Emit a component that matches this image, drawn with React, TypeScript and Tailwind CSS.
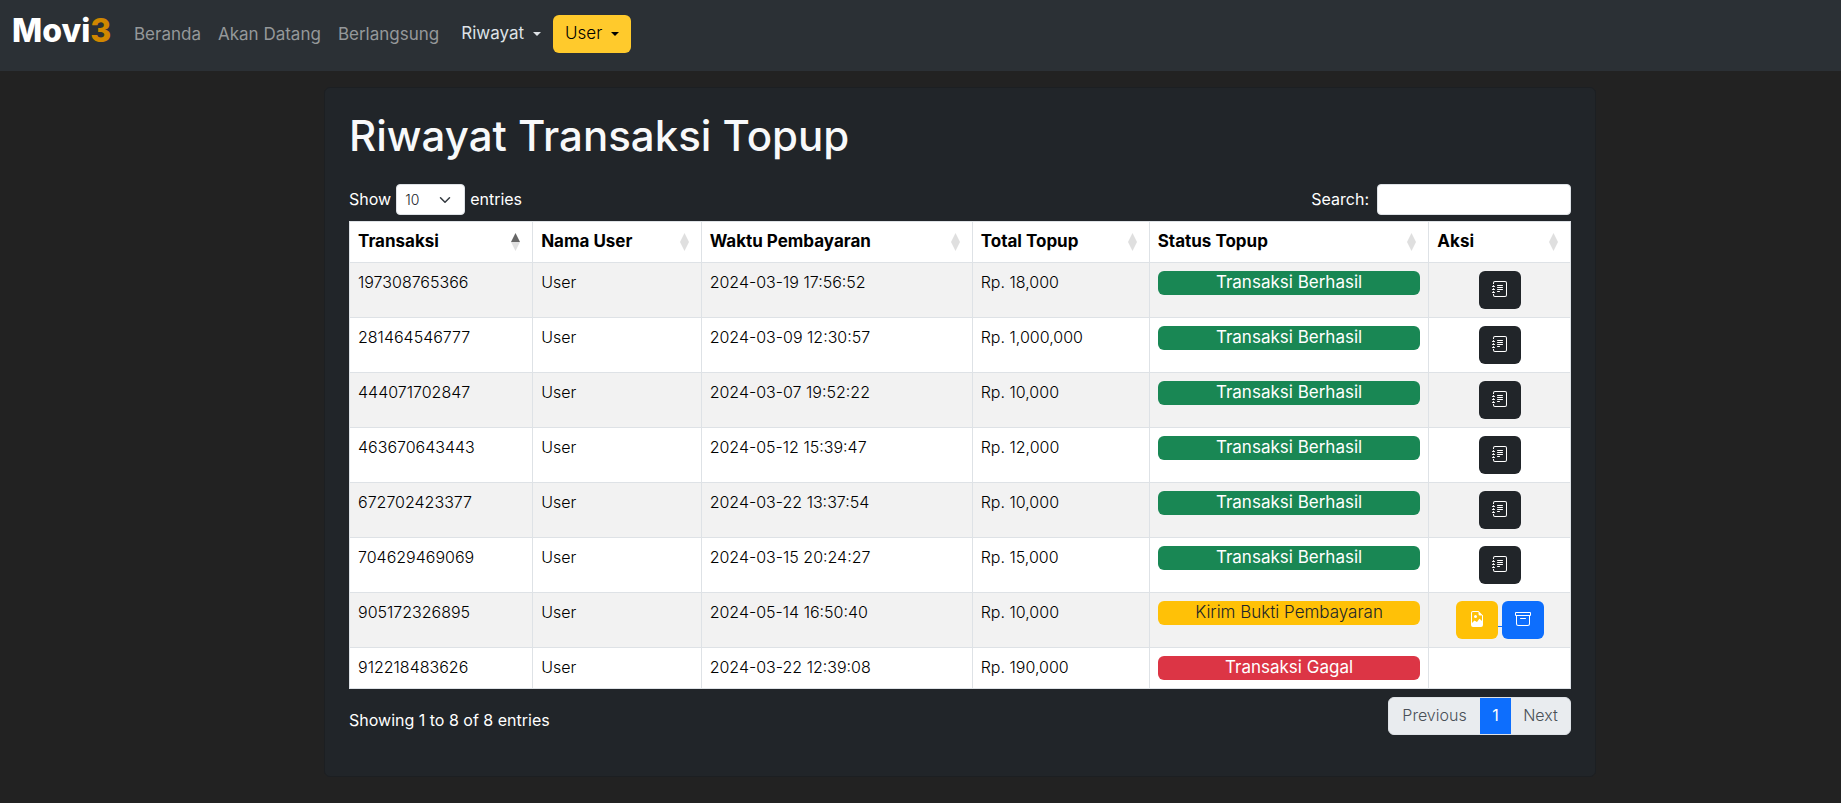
import { BsArchive, BsFileEarmarkImage, BsJournalText } from "react-icons/bs";

type Status = "success" | "pending" | "failed";

interface Transaction {
  id: string;
  time: string;
  total: string;
  status: Status;
}

const transactions: Transaction[] = [
  { id: "197308765366", time: "2024-03-19 17:56:52", total: "Rp. 18,000", status: "success" },
  { id: "281464546777", time: "2024-03-09 12:30:57", total: "Rp. 1,000,000", status: "success" },
  { id: "444071702847", time: "2024-03-07 19:52:22", total: "Rp. 10,000", status: "success" },
  { id: "463670643443", time: "2024-05-12 15:39:47", total: "Rp. 12,000", status: "success" },
  { id: "672702423377", time: "2024-03-22 13:37:54", total: "Rp. 10,000", status: "success" },
  { id: "704629469069", time: "2024-03-15 20:24:27", total: "Rp. 15,000", status: "success" },
  { id: "905172326895", time: "2024-05-14 16:50:40", total: "Rp. 10,000", status: "pending" },
  { id: "912218483626", time: "2024-03-22 12:39:08", total: "Rp. 190,000", status: "failed" },
];

const statuses: Record<Status, { label: string; className: string }> = {
  success: { label: "Transaksi Berhasil", className: "bg-[#198754] text-white" },
  pending: { label: "Kirim Bukti Pembayaran", className: "bg-[#ffc107] font-light text-[#212529]" },
  failed: { label: "Transaksi Gagal", className: "bg-[#dc3545] text-white" },
};

const columns = [
  { label: "Transaksi", width: "w-[15%]" },
  { label: "Nama User", width: "w-[13.8%]" },
  { label: "Waktu Pembayaran", width: "w-[22.2%]" },
  { label: "Total Topup", width: "w-[14.5%]" },
  { label: "Status Topup", width: "w-[22.9%]" },
  { label: "Aksi", width: "w-[11.6%]" },
];

function Caret() {
  return (
    <svg className="h-[4px] w-[8px]" viewBox="0 0 8 4" fill="currentColor" aria-hidden="true">
      <path d="M0 0h8L4 4z" />
    </svg>
  );
}

function SortIcon({ ascending }: { ascending: boolean }) {
  return (
    <svg className="h-[18px] w-[9px] shrink-0" viewBox="0 0 9 18" aria-hidden="true">
      <path d="M4.500 0 9 9H0z" fill={ascending ? "#666" : "#dfdfdf"} />
      <path d="M4.500 18 9 9H0z" fill="#dfdfdf" />
    </svg>
  );
}

const iconButton = "flex h-[38px] w-[42px] items-center justify-center rounded-md pb-0.5 text-white";
const textCell = "border border-[#dee2e6] px-2 pt-[7px] pb-[9px] font-light";

function Actions({ status }: { status: Status }) {
  if (status === "failed") return null;
  if (status === "success") {
    return (
      <button type="button" aria-label="Detail" className={`${iconButton} bg-[#212529]`}>
        <BsJournalText size={16} />
      </button>
    );
  }
  return (
    <>
      <a href="#bukti" aria-label="Kirim bukti" className="flex items-center text-[#0d6efd]">
        <span className={`${iconButton} bg-[#ffc107]`}>
          <BsFileEarmarkImage size={16} />
        </span>
        <span className="mt-3 h-px w-1 bg-[#0d6efd]" />
      </a>
      <button type="button" aria-label="Arsip" className={`${iconButton} bg-[#0d6efd]`}>
        <BsArchive size={16} />
      </button>
    </>
  );
}

export default function App() {
  return (
    <div className="min-h-screen bg-[#222222] font-['Inter',sans-serif] text-base text-white">
      <nav className="flex h-[71px] items-start bg-[#2b3035] px-3 pt-[15px] text-[17px]">
        <a href="#home" className="-mt-2 w-[122px] text-[32px] leading-[48px] font-extrabold">
          Movi<span className="text-[#d08700]">3</span>
        </a>
        <div className="flex h-10 items-center gap-[17px] text-[#95989a]">
          <a href="#beranda">Beranda</a>
          <a href="#akan-datang">Akan Datang</a>
          <a href="#berlangsung">Berlangsung</a>
        </div>
        <button type="button" className="ml-[22px] flex h-[38px] items-center gap-[9px] text-[#dee2e6]">
          Riwayat <Caret />
        </button>
        <button type="button" className="ml-3 flex h-[38px] items-center gap-[9px] rounded-md bg-[#ffca2c] px-3 font-light text-black">
          User <Caret />
        </button>
      </nav>

      <main className="pt-4 pr-[245px] pb-[25px] pl-[324px]">
        <section className="rounded-md border border-[#1c1f22] bg-[#212529] px-6 pt-6 pb-[41px]">
          <h1 className="text-[42px] leading-[48px] font-medium text-[#f8f9fa]">Riwayat Transaksi Topup</h1>
          <div className="mt-6 flex items-center justify-between">
            <label className="flex items-center gap-[5px]">
              <span className="pb-0.5">Show</span>
              <span className="relative">
                <select className="h-[31px] w-[69px] appearance-none rounded-sm border border-[#dee2e6] bg-white pl-2 text-sm font-light text-[#212529]">
                  <option>10</option>
                  <option>25</option>
                  <option>50</option>
                  <option>100</option>
                </select>
                <svg
                  className="pointer-events-none absolute top-[10px] right-[14px] h-3 w-3"
                  viewBox="0 0 16 16"
                  fill="none"
                  stroke="#343a40"
                  strokeWidth="2"
                  strokeLinecap="round"
                  strokeLinejoin="round"
                  aria-hidden="true"
                >
                  <path d="m2 5 6 6 6-6" />
                </svg>
              </span>
              <span className="pb-0.5">entries</span>
            </label>
            <label className="flex items-center gap-2">
              <span className="pb-0.5">Search:</span>
              <input type="search" className="h-[31px] w-[194px] rounded-sm border border-[#dee2e6] bg-white px-2 text-sm text-[#212529]" />
            </label>
          </div>

          <table className="mt-[6px] w-full table-fixed border-collapse bg-white text-left text-black">
            <thead>
              <tr>
                {columns.map((column, index) => (
                  <th key={column.label} className={`${column.width} border border-[#dee2e6] py-2 pr-3 pl-2 font-bold`}>
                    <span className="flex h-6 items-center justify-between text-[17px]">
                      {column.label}
                      <SortIcon ascending={index === 0} />
                    </span>
                  </th>
                ))}
              </tr>
            </thead>
            <tbody>
              {transactions.map((transaction) => (
                <tr key={transaction.id} className="align-top odd:bg-[#f2f2f2]">
                  <td className={textCell}>{transaction.id}</td>
                  <td className={textCell}>User</td>
                  <td className={textCell}>{transaction.time}</td>
                  <td className={textCell}>{transaction.total}</td>
                  <td className="border border-[#dee2e6] p-2">
                    <div className={`h-6 rounded-md text-center text-[17px] leading-[23px] ${statuses[transaction.status].className}`}>
                      {statuses[transaction.status].label}
                    </div>
                  </td>
                  <td className="border border-[#dee2e6] p-2">
                    <div className="flex justify-center">
                      <Actions status={transaction.status} />
                    </div>
                  </td>
                </tr>
              ))}
            </tbody>
          </table>

          <div className="mt-2 flex items-start justify-between">
            <p className="pt-[11px]">Showing 1 to 8 of 8 entries</p>
            <div className="flex h-[38px] overflow-hidden rounded-md border border-[#dee2e6] bg-[#e9ecef] font-light text-[#495057]">
              <button type="button" disabled className="w-[91px] pb-0.5">Previous</button>
              <button type="button" className="-my-px w-[31px] bg-[#0d6efd] pb-0.5 font-normal text-white">1</button>
              <button type="button" disabled className="w-[59px] pb-0.5">Next</button>
            </div>
          </div>
        </section>
      </main>
    </div>
  );
}
